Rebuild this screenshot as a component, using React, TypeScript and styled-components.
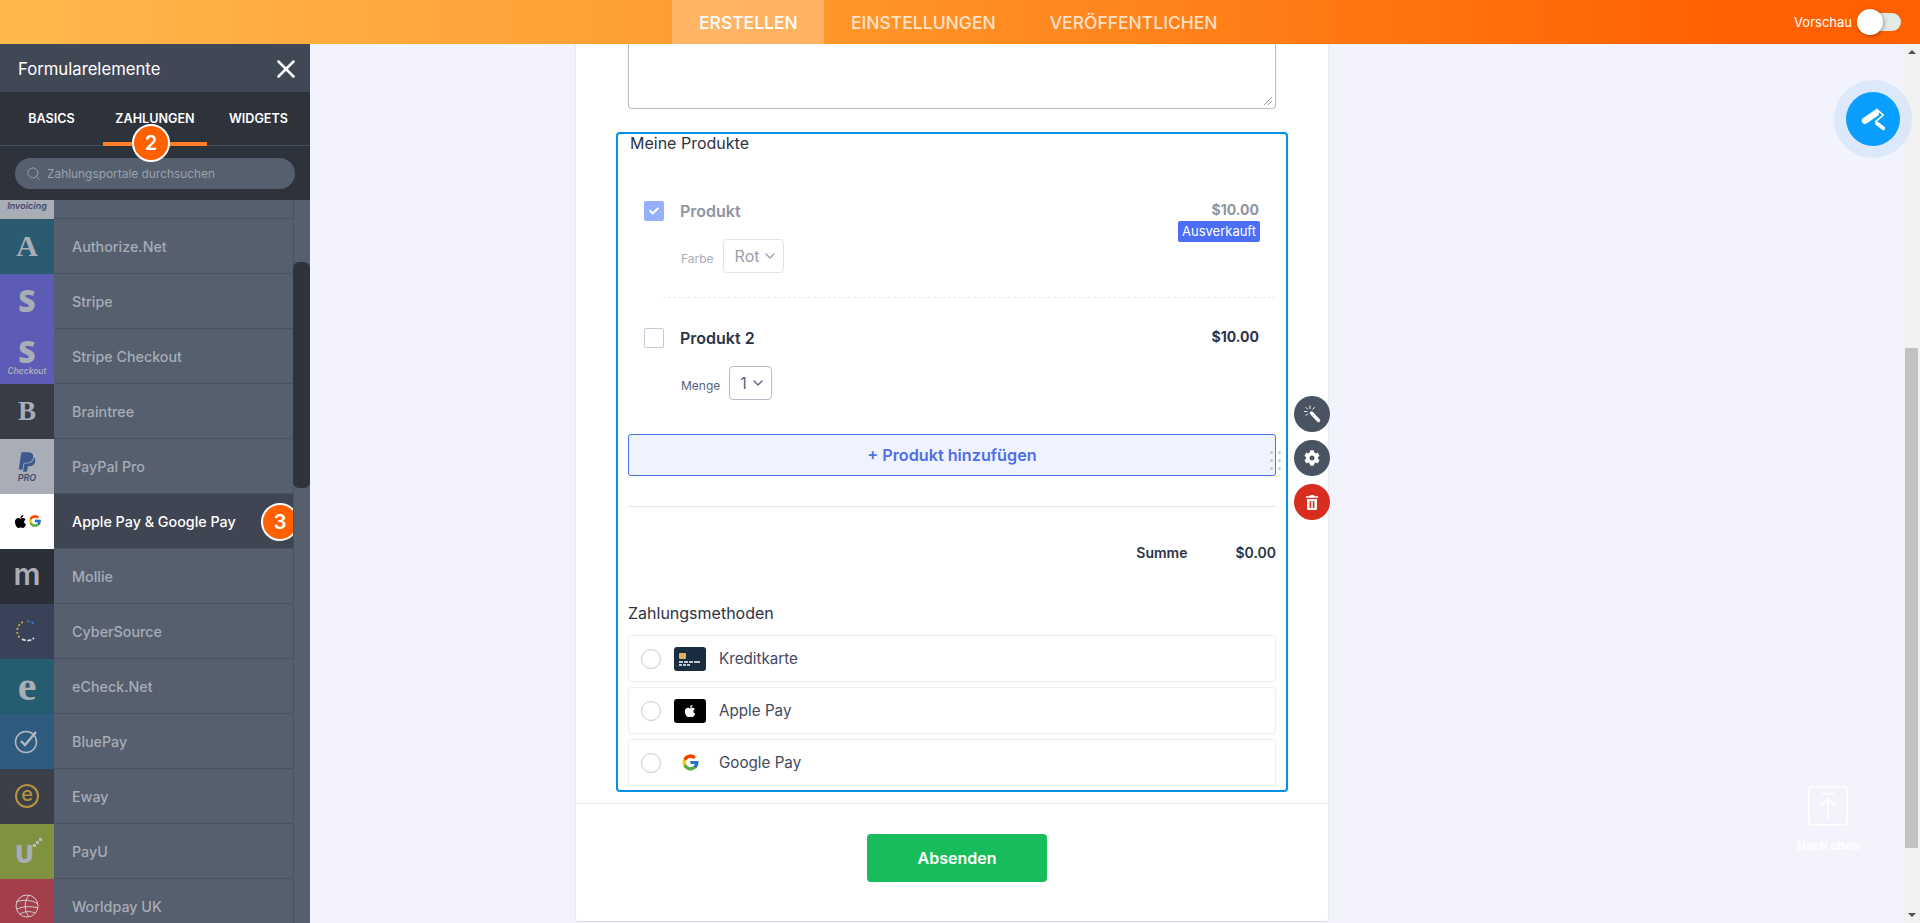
import React from "react";
import styled, { createGlobalStyle } from "styled-components";
import { ChevronDown, Search, X } from "lucide-react";
import { FaApple, FaCheck, FaCog, FaPaypal } from "react-icons/fa";
import { FcGoogle } from "react-icons/fc";

const GlobalStyle = createGlobalStyle`
  html, body {
    margin: 0;
    height: 100%;
    overflow: hidden;
    background: #f3f3fe;
    font-family: Inter, "Liberation Sans", sans-serif;
  }
  * { box-sizing: border-box; }
`;

const Page = styled.div`
  width: 1920px;
  height: 923px;
  display: flex;
  flex-direction: column;
  overflow: hidden;
`;

/* top bar */
const TopBar = styled.header`
  height: 44px;
  flex: none;
  display: flex;
  align-items: stretch;
  padding-left: 672px;
  background: linear-gradient(90deg, #ffb84d 0%, #ff9a2e 40%, #ff6100 90%, #ff6100 100%);
`;

const TopTab = styled.div<{ $active?: boolean }>`
  display: flex;
  align-items: center;
  padding: 0 27px;
  font-size: 17.5px;
  font-weight: 500;
  color: ${(p) => (p.$active ? "#fff" : "rgba(255,255,255,0.75)")};
  background: ${(p) => (p.$active ? "rgba(255,255,255,0.25)" : "transparent")};
  width: ${(p) => (p.$active ? "152px" : "auto")};
`;

const PreviewWrap = styled.div`
  margin-left: auto;
  display: flex;
  align-items: center;
  gap: 5px;
  padding-right: 19px;
  font-size: 13px;
  color: #fff;
`;

const Toggle = styled.div`
  position: relative;
  width: 44px;
  height: 18px;
  border-radius: 9px;
  background: #e3ebe8;
`;

const ToggleKnob = styled.div`
  position: absolute;
  left: 0;
  top: -4px;
  width: 26px;
  height: 26px;
  border-radius: 50%;
  background: #fff;
  box-shadow: 1px 1px 4px rgba(0, 0, 0, 0.35);
`;

const Body = styled.div`
  position: relative;
  flex: 1;
  display: flex;
  min-height: 0;
`;

/* left panel */
const Sidebar = styled.aside`
  width: 310px;
  flex: none;
  display: flex;
  flex-direction: column;
  overflow: hidden;
  background: #2e323b;
`;

const SideHead = styled.div`
  height: 48px;
  flex: none;
  display: flex;
  align-items: center;
  justify-content: space-between;
  padding: 1px 9px 0 18px;
  background: #404855;
  color: #fff;
  font-size: 16.7px;
`;

const SideTabs = styled.div`
  height: 54px;
  flex: none;
  display: grid;
  grid-template-columns: 103px 104px 103px;
  border-bottom: 1px solid #454d5b;
`;

const SideTab = styled.div<{ $active?: boolean }>`
  position: relative;
  padding-top: 19px;
  text-align: center;
  font-size: 12.6px;
  font-weight: 600;
  line-height: 15px;
  color: #fff;
  border-bottom: 4px solid ${(p) => (p.$active ? "#ff7f26" : "transparent")};
  height: 54px;
`;

const StepBadge = styled.div`
  position: absolute;
  width: 38px;
  height: 38px;
  border-radius: 50%;
  background: #ff6100;
  border: 2px solid #fff;
  color: #fff;
  font-size: 20px;
  font-weight: 600;
  display: flex;
  align-items: center;
  justify-content: center;
  z-index: 3;
`;

const TabBadge = styled(StepBadge)`
  left: 29px;
  top: 32px;
`;

const RowBadge = styled(StepBadge)`
  right: -6px;
  top: 9px;
`;

const SearchArea = styled.div`
  height: 54px;
  flex: none;
  padding: 12px 15px 0;
`;

const SearchPill = styled.div`
  height: 31px;
  border-radius: 16px;
  background: #555f6e;
  display: flex;
  align-items: center;
  gap: 6px;
  padding-left: 11px;
  color: #9ba2ae;
  font-size: 11.9px;
`;

const ListArea = styled.div`
  flex: 1;
  min-height: 0;
  display: flex;
  background: #555f6e;
`;

const List = styled.div`
  width: 294px;
  flex: none;
  border-right: 1px solid #485260;
  overflow: hidden;
`;

const ListInner = styled.div`
  margin-top: -36px;
`;

const ListThumb = styled.div`
  width: 17px;
  height: 226px;
  margin: 62px 0 0 -1px;
  border-radius: 6px;
  background: #2f333c;
  z-index: 2;
`;

const Row = styled.div<{ $active?: boolean }>`
  position: relative;
  height: 55px;
  display: flex;
  align-items: center;
  border-bottom: 1px solid #485260;
  background: ${(p) => (p.$active ? "#3f4552" : "transparent")};
  color: ${(p) => (p.$active ? "#fff" : "#a7acb6")};
  font-size: 14.3px;
  font-weight: 500;
`;

const Logo = styled.div<{ $bg: string }>`
  width: 54px;
  height: 55px;
  flex: none;
  margin-right: 18px;
  position: relative;
  display: flex;
  flex-direction: column;
  align-items: center;
  justify-content: center;
  overflow: hidden;
  background: ${(p) => p.$bg};
  color: #a9adb6;
`;

const SerifMark = styled.span<{ $size?: number }>`
  font-family: "Liberation Serif", serif;
  font-weight: 700;
  font-size: ${(p) => p.$size || 30}px;
  line-height: ${(p) => p.$size || 30}px;
`;

const SansMark = styled.span`
  font-family: "Open Sans", sans-serif;
  font-weight: 800;
  font-size: 30px;
  line-height: 30px;
`;

const MollieMark = styled.span`
  font-weight: 600;
  font-size: 30px;
  line-height: 30px;
  margin-top: -4px;
`;

const UMark = styled.span`
  font-family: "Open Sans", sans-serif;
  font-weight: 800;
  font-size: 25px;
  line-height: 25px;
  margin: 5px 5px 0 0;
`;

const UDots = styled.svg`
  position: absolute;
  left: 33px;
  top: 14px;
  width: 9px;
  height: 11px;
`;

const TinyItalic = styled.span<{ $color?: string; $size?: number }>`
  font-style: italic;
  font-size: ${(p) => p.$size || 9}px;
  font-weight: 600;
  line-height: 9px;
  color: ${(p) => p.$color || "inherit"};
`;

const InvoicingTag = styled(TinyItalic)`
  margin-top: 29px;
`;

const EwayRing = styled.span`
  width: 24px;
  height: 24px;
  border: 2px solid #b8923c;
  border-radius: 50%;
  color: #b8923c;
  font-size: 20px;
  line-height: 17px;
  text-align: center;
`;

const UkTag = styled.span`
  position: absolute;
  right: 9px;
  bottom: 1px;
  font-size: 8px;
  font-style: italic;
  color: #d6d8dc;
`;

const StackedG = styled.div`
  display: flex;
  align-items: center;
  font-size: 14px;
  color: #000;
`;

/* form */
const Canvas = styled.main`
  flex: 1;
  min-width: 0;
  overflow: hidden;
  padding-left: 265px;
`;

const Card = styled.div`
  width: 754px;
  height: 878px;
  background: #fff;
  border-right: 1px solid #e6e8f2;
  border-left: 1px solid #e6e8f2;
  border-bottom: 1px solid #dcdfeb;
  border-radius: 0 0 4px 4px;
`;

const Textarea = styled.div`
  position: relative;
  margin-left: 52px;
  width: 648px;
  height: 65px;
  border: 1px solid #b8bdc9;
  border-top: 0;
  border-radius: 0 0 4px 4px;
`;

const ResizeGrip = styled.svg`
  position: absolute;
  right: 3px;
  bottom: 3px;
  width: 9px;
  height: 9px;
`;

const Box = styled.section`
  position: relative;
  margin: 23px 0 11px 40px;
  width: 672px;
  height: 660px;
  border: 2px solid #0093e5;
  border-radius: 4px;
  padding: 0 10px;
`;

const BoxTitle = styled.div`
  font-size: 16px;
  line-height: 19px;
  padding-left: 2px;
  color: #2c3345;
`;

const Product = styled.div<{ $first?: boolean; $disabled?: boolean }>`
  margin: ${(p) => (p.$first ? "48px" : "30px")} 17px 0 16px;
  display: flex;
  justify-content: space-between;
  color: ${(p) => (p.$disabled ? "#8f949f" : "#2c3345")};
`;

const ProductHead = styled.div`
  display: flex;
  align-items: center;
  gap: 16px;
  height: 20px;
  font-size: 16px;
  font-weight: 600;
`;

const Checkbox = styled.span<{ $checked?: boolean }>`
  width: 20px;
  height: 20px;
  border-radius: 2px;
  display: flex;
  align-items: center;
  justify-content: center;
  color: #fff;
  font-size: 10px;
  background: ${(p) => (p.$checked ? "#96b0fb" : "#fff")};
  border: 1px solid ${(p) => (p.$checked ? "#96b0fb" : "#c3cad8")};
`;

const Options = styled.div`
  display: flex;
  align-items: center;
  gap: 9px;
  margin: 18px 0 0 37px;
`;

const OptionLabel = styled.span<{ $disabled?: boolean }>`
  font-size: 12px;
  padding-top: 4px;
  color: ${(p) => (p.$disabled ? "#a8adb6" : "#57647e")};
`;

const Select = styled.div<{ $disabled?: boolean }>`
  height: 34px;
  display: flex;
  align-items: center;
  gap: 3px;
  padding: 0 5px 0 ${(p) => (p.$disabled ? "11px" : "10px")};
  font-size: 16px;
  border-radius: 4px;
  border: 1px solid ${(p) => (p.$disabled ? "#dfe2e8" : "#b8bdc9")};
  color: ${(p) => (p.$disabled ? "#9a9fa9" : "#57647e")};
`;

const PriceCol = styled.div`
  display: flex;
  flex-direction: column;
  align-items: flex-end;
`;

const Price = styled.div`
  font-size: 14px;
  font-weight: 700;
  line-height: 18px;
`;

const SoldOut = styled.div`
  margin: 2px -1px 0 0;
  height: 21px;
  padding: 0 4px;
  border-radius: 2px;
  background: #4c6ef5;
  color: #fff;
  font-size: 13px;
  line-height: 21px;
`;

const DashedLine = styled.div`
  margin: 24px 0 0 35px;
  border-top: 1px dashed #e8eaee;
`;

const AddButton = styled.div`
  position: relative;
  margin-top: 34px;
  height: 42px;
  display: flex;
  align-items: center;
  justify-content: center;
  border: 1px solid #4c73e8;
  border-radius: 3px;
  background: #eff3fd;
  color: #4e6fe8;
  font-size: 16.2px;
  font-weight: 600;
`;

const DragDots = styled.div`
  position: absolute;
  right: -6px;
  top: 16px;
  display: grid;
  grid-template-columns: 3px 3px;
  gap: 5px 5px;
`;

const DragDot = styled.i`
  width: 3px;
  height: 3px;
  border-radius: 50%;
  background: #c5cad6;
`;

const Divider = styled.div`
  margin-top: 30px;
  border-top: 1px solid #e3e5ea;
`;

const TotalRow = styled.div`
  margin-top: 35px;
  height: 20px;
  display: flex;
  justify-content: flex-end;
  align-items: center;
  gap: 48px;
  font-size: 14px;
  font-weight: 600;
  color: #2c3345;
`;

const MethodsTitle = styled.div`
  margin: 41px 0 11px;
  font-size: 16px;
  line-height: 21px;
  color: #2c3345;
`;

const Methods = styled.div`
  display: flex;
  flex-direction: column;
  gap: 5px;
`;

const Method = styled.div`
  height: 47px;
  display: flex;
  align-items: center;
  padding-left: 12px;
  border: 1px solid #eceef2;
  border-radius: 3px;
  font-size: 15.2px;
  color: #3f4a60;
`;

const Radio = styled.span`
  width: 20px;
  height: 20px;
  flex: none;
  border-radius: 50%;
  border: 1px solid #c3cad8;
  margin-right: 13px;
`;

const MethodIcon = styled.span<{ $bg?: string }>`
  width: 32px;
  height: 24px;
  flex: none;
  margin-right: 13px;
  border-radius: 3px;
  display: flex;
  align-items: center;
  justify-content: center;
  background: ${(p) => p.$bg || "transparent"};
  color: #fff;
  font-size: 14px;
`;

const SideActions = styled.div`
  position: absolute;
  right: -44px;
  top: 262px;
  display: flex;
  flex-direction: column;
  gap: 8px;
`;

const SideAction = styled.div<{ $danger?: boolean }>`
  width: 36px;
  height: 36px;
  border-radius: 50%;
  display: flex;
  align-items: center;
  justify-content: center;
  color: #fff;
  font-size: 16px;
  background: ${(p) => (p.$danger ? "#d92d20" : "#4a5361")};
`;

const FormFooter = styled.div`
  border-top: 1px solid #e6e8ef;
  padding-top: 30px;
  display: flex;
  justify-content: center;
`;

const SubmitButton = styled.div`
  width: 180px;
  height: 48px;
  margin-left: 10px;
  border-radius: 4px;
  background: #18bd5b;
  color: #fff;
  font-size: 16px;
  font-weight: 600;
  display: flex;
  align-items: center;
  justify-content: center;
`;

/* right side */
const Scrollbar = styled.div`
  width: 17px;
  flex: none;
  display: flex;
  flex-direction: column;
  align-items: center;
  background: #f1f1f1;
`;

const ScrollArrow = styled.i<{ $down?: boolean }>`
  flex: none;
  width: 0;
  height: 0;
  margin: ${(p) => (p.$down ? "auto 0 6px" : "6px 0 0")};
  border-left: 4px solid transparent;
  border-right: 4px solid transparent;
  border-${(p) => (p.$down ? "top" : "bottom")}: 4px solid #505050;
`;

const ScrollThumb = styled.div`
  width: 13px;
  height: 500px;
  margin-top: 294px;
  background: #c1c1c1;
`;

const PaintHalo = styled.div`
  position: absolute;
  right: 8px;
  top: 36px;
  width: 78px;
  height: 78px;
  border-radius: 50%;
  background: rgba(200, 222, 250, 0.55);
  display: flex;
  align-items: center;
  justify-content: center;
`;

const PaintButton = styled.div`
  width: 54px;
  height: 54px;
  border-radius: 50%;
  background: #0a9fff;
  display: flex;
  align-items: center;
  justify-content: center;
`;

const BackToTop = styled.div`
  position: absolute;
  left: 1768px;
  top: 742px;
  width: 120px;
  display: flex;
  flex-direction: column;
  align-items: center;
  gap: 12px;
  color: #fff;
  font-size: 12px;
  font-weight: 700;
`;

const items: { name: string; bg: string; logo: React.ReactNode }[] = [
  { name: "", bg: "#a9adb5", logo: <InvoicingTag $color="#3d4a72">Invoicing</InvoicingTag> },
  { name: "Authorize.Net", bg: "#2b5b70", logo: <SerifMark>A</SerifMark> },
  { name: "Stripe", bg: "#5c5bb5", logo: <SansMark>S</SansMark> },
  {
    name: "Stripe Checkout",
    bg: "#5c5bb5",
    logo: (
      <>
        <SansMark>S</SansMark>
        <TinyItalic $size={8.4}>Checkout</TinyItalic>
      </>
    ),
  },
  { name: "Braintree", bg: "#373c45", logo: <SerifMark $size={27}>B</SerifMark> },
  {
    name: "PayPal Pro",
    bg: "#a9adb6",
    logo: (
      <>
        <FaPaypal size={22} color="#3c5a8e" />
        <TinyItalic $color="#3d4a72">PRO</TinyItalic>
      </>
    ),
  },
  {
    name: "Apple Pay & Google Pay",
    bg: "#fff",
    logo: (
      <StackedG>
        <FaApple size={15} />
        <FcGoogle size={14} />
      </StackedG>
    ),
  },
  { name: "Mollie", bg: "#2a2f38", logo: <MollieMark>m</MollieMark> },
  {
    name: "CyberSource",
    bg: "#394257",
    logo: (
      <svg width="24" height="24" viewBox="0 0 24 24" fill="none" strokeWidth="1.8">
        <path d="M12 2a10 10 0 0 1 8 4" stroke="#3f6fc4" strokeDasharray="3 1.5" />
        <path d="M8 3a10 10 0 0 0-3 16" stroke="#d6a93a" strokeDasharray="2 2" />
        <path d="M7 20a10 10 0 0 0 12-1" stroke="#d8dadf" strokeDasharray="4 1.5" />
      </svg>
    ),
  },
  { name: "eCheck.Net", bg: "#265c70", logo: <SerifMark $size={42}>e</SerifMark> },
  {
    name: "BluePay",
    bg: "#2f5b7f",
    logo: (
      <svg width="26" height="26" viewBox="0 0 26 26" fill="none" stroke="#b5b9c1" strokeWidth="1.5">
        <circle cx="12" cy="14" r="10.5" />
        <path d="M7 13l4 4 11-13" strokeWidth="2.4" />
      </svg>
    ),
  },
  { name: "Eway", bg: "#3a3f48", logo: <EwayRing>e</EwayRing> },
  {
    name: "PayU",
    bg: "#7f9240",
    logo: (
      <>
        <UMark>U</UMark>
        <UDots viewBox="0 0 9 11" fill="#b5b9c1">
          <rect x="0" y="6" width="3" height="3" />
          <rect x="3" y="3" width="3" height="3" />
          <rect x="6" y="0" width="3" height="3" />
        </UDots>
      </>
    ),
  },
  {
    name: "Worldpay UK",
    bg: "#a33f4b",
    logo: (
      <>
        <svg width="26" height="26" viewBox="0 0 26 26" fill="none" stroke="#d6d8dc" strokeWidth="0.9">
          <circle cx="13" cy="13" r="11" />
          <path d="M2 9c8-3 16-2 22 2M3 16c7-3 14-3 21-1M6 21c5-3 11-3 15-1M15 2c-5 6-5 16 0 22" />
        </svg>
        <UkTag>UK</UkTag>
      </>
    ),
  },
];

function CardIcon() {
  return (
    <svg width="32" height="24" viewBox="0 0 32 24">
      <rect width="32" height="24" rx="3" fill="#1a2c40" />
      <rect x="5" y="6" width="7" height="6" rx="1" fill="#d9b25f" />
      <path d="M5 14h4v2H5zM10 14h4v2h-4zM15 14h4v2h-4zM20 14h6v2h-6zM5 17h3v2H5zM9 17h3v2H9zM13 17h3v2h-3z" fill="#c5c9cf" />
    </svg>
  );
}

function WandIcon() {
  return (
    <svg width="18" height="18" viewBox="0 0 18 18" fill="none" stroke="#fff" strokeLinecap="round">
      <path d="M8.5 8l7 7.5" strokeWidth="3.4" />
      <path d="M7 1v2.5M1.5 6.5H4M3 2.5l1.7 1.7M11.5 2.5L9.8 4.2M3 10.5l1.7-1.7" strokeWidth="1" />
    </svg>
  );
}

function TrashIcon() {
  return (
    <svg width="12" height="15" viewBox="0 0 12 15" fill="#fff">
      <path d="M4 0h4l.6 1.2H12v1.6H0V1.2h3.4zM1 4h10v9.5a1.5 1.5 0 0 1-1.5 1.5h-7A1.5 1.5 0 0 1 1 13.5zm2.6 2v7h1.6V6zm3.2 0v7h1.6V6z" fillRule="evenodd" />
    </svg>
  );
}

export default function App() {
  return (
    <Page>
      <GlobalStyle />
      <TopBar>
        <TopTab $active>ERSTELLEN</TopTab>
        <TopTab>EINSTELLUNGEN</TopTab>
        <TopTab>VERÖFFENTLICHEN</TopTab>
        <PreviewWrap>
          Vorschau
          <Toggle>
            <ToggleKnob />
          </Toggle>
        </PreviewWrap>
      </TopBar>
      <Body>
        <Sidebar>
          <SideHead>
            Formularelemente
            <X size={30} color="#fff" strokeWidth={2} />
          </SideHead>
          <SideTabs>
            <SideTab>BASICS</SideTab>
            <SideTab $active>
              ZAHLUNGEN
              <TabBadge>2</TabBadge>
            </SideTab>
            <SideTab>WIDGETS</SideTab>
          </SideTabs>
          <SearchArea>
            <SearchPill>
              <Search size={15} strokeWidth={1.5} />
              Zahlungsportale durchsuchen
            </SearchPill>
          </SearchArea>
          <ListArea>
            <List>
              <ListInner>
                {items.map((item, i) => {
                  const active = item.name.startsWith("Apple");
                  return (
                    <Row key={i} $active={active}>
                      <Logo $bg={item.bg}>{item.logo}</Logo>
                      {item.name}
                      {active && <RowBadge>3</RowBadge>}
                    </Row>
                  );
                })}
              </ListInner>
            </List>
            <ListThumb />
          </ListArea>
        </Sidebar>
        <Canvas>
          <Card>
            <Textarea>
              <ResizeGrip viewBox="0 0 9 9" stroke="#9a9fa9" strokeWidth="1">
                <path d="M1 9l8-8M5 9l4-4" />
              </ResizeGrip>
            </Textarea>
            <Box>
              <BoxTitle>Meine Produkte</BoxTitle>
              <Product $first $disabled>
                <div>
                  <ProductHead>
                    <Checkbox $checked>
                      <FaCheck />
                    </Checkbox>
                    Produkt
                  </ProductHead>
                  <Options>
                    <OptionLabel $disabled>Farbe</OptionLabel>
                    <Select $disabled>
                      Rot
                      <ChevronDown size={16} />
                    </Select>
                  </Options>
                </div>
                <PriceCol>
                  <Price>$10.00</Price>
                  <SoldOut>Ausverkauft</SoldOut>
                </PriceCol>
              </Product>
              <DashedLine />
              <Product>
                <div>
                  <ProductHead>
                    <Checkbox />
                    Produkt 2
                  </ProductHead>
                  <Options>
                    <OptionLabel>Menge</OptionLabel>
                    <Select>
                      1
                      <ChevronDown size={16} />
                    </Select>
                  </Options>
                </div>
                <PriceCol>
                  <Price>$10.00</Price>
                </PriceCol>
              </Product>
              <AddButton>
                + Produkt hinzufügen
                <DragDots>
                  {[0, 1, 2, 3, 4, 5].map((d) => (
                    <DragDot key={d} />
                  ))}
                </DragDots>
              </AddButton>
              <Divider />
              <TotalRow>
                <span>Summe</span>
                <span>$0.00</span>
              </TotalRow>
              <MethodsTitle>Zahlungsmethoden</MethodsTitle>
              <Methods>
                <Method>
                  <Radio />
                  <MethodIcon>
                    <CardIcon />
                  </MethodIcon>
                  Kreditkarte
                </Method>
                <Method>
                  <Radio />
                  <MethodIcon $bg="#000">
                    <FaApple />
                  </MethodIcon>
                  Apple Pay
                </Method>
                <Method>
                  <Radio />
                  <MethodIcon>
                    <FcGoogle size={19} />
                  </MethodIcon>
                  Google Pay
                </Method>
              </Methods>
              <SideActions>
                <SideAction>
                  <WandIcon />
                </SideAction>
                <SideAction>
                  <FaCog />
                </SideAction>
                <SideAction $danger>
                  <TrashIcon />
                </SideAction>
              </SideActions>
            </Box>
            <FormFooter>
              <SubmitButton>Absenden</SubmitButton>
            </FormFooter>
          </Card>
        </Canvas>
        <Scrollbar>
          <ScrollArrow />
          <ScrollThumb />
          <ScrollArrow $down />
        </Scrollbar>
        <PaintHalo>
          <PaintButton>
            <svg width="28" height="28" viewBox="0 0 28 28" fill="none" stroke="#fff" strokeLinecap="round" strokeLinejoin="round">
              <path d="M6 15.7L16.7 8.3" strokeWidth="6.5" />
              <path d="M17.7 4.3L24.3 10L16.7 16.7" strokeWidth="1.6" />
              <path d="M18 18.5L24.3 23.3" strokeWidth="3.6" />
            </svg>
          </PaintButton>
        </PaintHalo>
        <BackToTop>
          <svg width="40" height="40" viewBox="0 0 40 40" fill="none" stroke="#fff" strokeWidth="1.6">
            <rect x="1" y="1" width="38" height="38" rx="3" />
            <path d="M13 8h14M20 33V13M13 20l7-7 7 7" />
          </svg>
          Nach oben
        </BackToTop>
      </Body>
    </Page>
  );
}
